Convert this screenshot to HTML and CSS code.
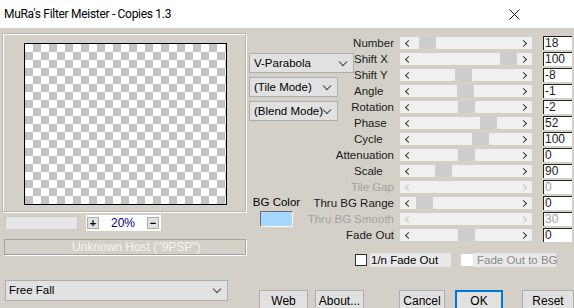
FILE: index.html
```html
<!DOCTYPE html>
<html lang="en">
<head>
    <meta charset="UTF-8">
    <title>MuRa's Filter Meister - Copies 1.3</title>
    <link rel="stylesheet" href="styles.css">
</head>
<body>
<div class="window">
    <div class="titlebar">
        <span class="title">MuRa's Filter Meister - Copies 1.3</span>
        <svg class="close" width="11" height="11" viewBox="0 0 11 11">
            <path d="M0.5 0.5 L10.5 10.5 M10.5 0.5 L0.5 10.5" stroke="#111" stroke-width="1" fill="none"/>
        </svg>
    </div>
    <div class="content">
        <div class="left">
            <div class="group">
                <div class="preview"></div>
            </div>
            <div class="zoomrow">
                <div class="progress"></div>
                <div class="zoombox">
                    <span class="zbtn">+</span>
                    <span class="zval">20%</span>
                    <span class="zbtn">&minus;</span>
                </div>
            </div>
            <div class="status">Unknown Host ("9PSP")</div>
            <div class="combo preset">Free Fall<span class="chev"></span></div>
        </div>
        <div class="right">
            <div class="upper">
                <div class="mid">
                    <div class="combo wide">V-Parabola<span class="chev"></span></div>
                    <div class="combo">(Tile Mode)<span class="chev"></span></div>
                    <div class="combo">(Blend Mode)<span class="chev"></span></div>
                    <div class="bgcolor">
                        <span>BG Color</span>
                        <div class="swatch"></div>
                    </div>
                </div>
                <div class="params">
                    <div class="row"><span class="lbl">Number</span><div class="track"><span class="al"></span><span class="thumb" style="margin-left:8px"></span><span class="ar"></span></div><span class="val">18</span></div>
                    <div class="row"><span class="lbl">Shift X</span><div class="track"><span class="al"></span><span class="thumb" style="margin-left:89px"></span><span class="ar"></span></div><span class="val">100</span></div>
                    <div class="row"><span class="lbl">Shift Y</span><div class="track"><span class="al"></span><span class="thumb" style="margin-left:44px"></span><span class="ar"></span></div><span class="val">-8</span></div>
                    <div class="row"><span class="lbl">Angle</span><div class="track"><span class="al"></span><span class="thumb" style="margin-left:46px"></span><span class="ar"></span></div><span class="val">-1</span></div>
                    <div class="row"><span class="lbl">Rotation</span><div class="track"><span class="al"></span><span class="thumb" style="margin-left:47px"></span><span class="ar"></span></div><span class="val">-2</span></div>
                    <div class="row"><span class="lbl">Phase</span><div class="track"><span class="al"></span><span class="thumb" style="margin-left:69px"></span><span class="ar"></span></div><span class="val">52</span></div>
                    <div class="row"><span class="lbl">Cycle</span><div class="track"><span class="al"></span><span class="thumb" style="margin-left:61px"></span><span class="ar"></span></div><span class="val">100</span></div>
                    <div class="row"><span class="lbl">Attenuation</span><div class="track"><span class="al"></span><span class="thumb" style="margin-left:47px"></span><span class="ar"></span></div><span class="val">0</span></div>
                    <div class="row"><span class="lbl">Scale</span><div class="track"><span class="al"></span><span class="thumb" style="margin-left:24px"></span><span class="ar"></span></div><span class="val">90</span></div>
                    <div class="row off"><span class="lbl">Tile Gap</span><div class="track"><span class="al"></span><span class="fill"></span><span class="ar"></span></div><span class="val">0</span></div>
                    <div class="row"><span class="lbl">Thru BG Range</span><div class="track"><span class="al"></span><span class="thumb" style="margin-left:5px"></span><span class="ar"></span></div><span class="val">0</span></div>
                    <div class="row off"><span class="lbl">Thru BG Smooth</span><div class="track"><span class="al"></span><span class="fill"></span><span class="ar"></span></div><span class="val">30</span></div>
                    <div class="row"><span class="lbl">Fade Out</span><div class="track"><span class="al"></span><span class="thumb" style="margin-left:47px"></span><span class="ar"></span></div><span class="val">0</span></div>
                    <div class="checks">
                        <label class="check"><span class="box"></span><span class="ctext">1/n Fade Out</span></label>
                        <label class="check off"><span class="box"></span><span class="ctext">Fade Out to BG</span></label>
                    </div>
                </div>
            </div>
            <div class="buttons">
                <span class="btn web">Web</span>
                <span class="btn about">About...</span>
                <span class="btn cancel">Cancel</span>
                <span class="btn ok">OK</span>
                <span class="btn reset">Reset</span>
            </div>
        </div>
    </div>
</div>
</body>
</html>
```

FILE: styles.css
```css
* {
    margin: 0;
    padding: 0;
    box-sizing: border-box;
}

body {
    background: #d4d0c8;
    font-family: "Liberation Sans", Arial, sans-serif;
    font-size: 11px;
    font-weight: 400;
    color: #000;
}

.window {
    width: 574px;
    height: 308px;
    overflow: hidden;
    display: flex;
    flex-direction: column;
}

.titlebar {
    flex-shrink: 0;
    height: 28px;
    background: #fff;
    display: flex;
    align-items: center;
    padding-left: 4px;
}

.title {
    font-family: Roboto, "Liberation Sans", sans-serif;
    font-size: 12px;
    letter-spacing: -0.3px;
    color: #000;
    flex: 1;
}

.close {
    margin-right: 54px;
}

.content {
    flex: 1;
    min-height: 0;
    display: flex;
    padding-top: 5px;
}

/* left side */
.left {
    width: 246px;
    margin-left: 2px;
    display: flex;
    flex-direction: column;
}

.group {
    flex-shrink: 0;
    height: 179px;
    border: 1px solid #bdb9b1;
    box-shadow: inset 1px 1px 0 #fff, 1px 1px 0 #fff;
    padding: 9px 0 0 21px;
}

.preview {
    width: 203px;
    height: 162px;
    border: 1px solid #000;
    background-color: #fff;
    background-image: repeating-conic-gradient(#c3c3c3 0 25%, #fff 0 50%);
    background-size: 16px 16px;
}

.zoomrow {
    display: flex;
    align-items: center;
    margin-top: 3px;
    height: 16px;
}

.progress {
    width: 73px;
    height: 14px;
    margin-left: 3px;
    background: #e6e6e6;
    border: 1px solid #c8c8c8;
}

.zoombox {
    margin-left: 8px;
    width: 75px;
    height: 16px;
    background: #fff;
    display: flex;
    align-items: center;
    padding: 0 2px 0 1px;
}

.zbtn {
    width: 12px;
    height: 12px;
    background: #e1e1e1;
    border: 1px solid #adadad;
    font-size: 11px;
    font-weight: bold;
    line-height: 10px;
    text-align: center;
}

.zval {
    flex: 1;
    text-align: center;
    color: #000080;
    font-size: 12px;
    line-height: 16px;
}

.status {
    margin-top: 8px;
    margin-left: 2px;
    height: 16px;
    border: 1px solid #a7a39b;
    box-shadow: 1px 1px 0 #fff;
    color: #f4f4f4;
    font-size: 12px;
    line-height: 14px;
    padding-left: 67px;
}

.combo {
    position: relative;
    flex-shrink: 0;
    width: 89px;
    height: 20px;
    background: #e1e1e1;
    border: 1px solid #adadad;
    font-size: 11.5px;
    line-height: 18px;
    padding-left: 4px;
    white-space: nowrap;
}

.combo.wide {
    width: 105px;
}

.chev {
    position: absolute;
    right: 7px;
    top: 5px;
    width: 6px;
    height: 6px;
    border-right: 1px solid #444;
    border-bottom: 1px solid #444;
    transform: rotate(45deg);
}

.preset {
    margin-top: 25px;
    margin-left: 3px;
    width: 223px;
    height: 21px;
    padding-left: 3px;
}

/* right side */
.right {
    flex: 1;
    display: flex;
    flex-direction: column;
}

.upper {
    display: flex;
    align-items: flex-start;
}

.mid {
    width: 108px;
    padding: 20px 0 0 3px;
    display: flex;
    flex-direction: column;
    gap: 4px;
}

.bgcolor {
    margin: 71px 0 0 7px;
    width: 41px;
    display: flex;
    flex-direction: column;
    align-items: center;
    font-size: 11.5px;
    white-space: nowrap;
}

.swatch {
    margin-top: 3px;
    width: 33px;
    height: 16px;
    background: #a6d7ff;
    border: 1px solid;
    border-color: #6d6d6d #fff #fff #6d6d6d;
}

.params {
    flex: 1;
    padding-top: 2px;
}

.row {
    display: flex;
    height: 16px;
    align-items: flex-start;
}

.lbl {
    width: 40px;
    flex-shrink: 0;
    direction: rtl;
    text-align: left;
    white-space: nowrap;
    font-size: 11.5px;
    line-height: 16px;
    color: #1a1a1a;
}

.track {
    margin: 2px 0 0 6px;
    width: 132px;
    height: 12px;
    background: #f0f0f0;
    display: flex;
    align-items: center;
}

.thumb {
    width: 17px;
    height: 12px;
    background: #cdcdcd;
}

.track .fill {
    flex: 1;
}

.al,
.ar {
    width: 5px;
    height: 5px;
    border-left: 1px solid #333;
    border-bottom: 1px solid #333;
}

.al {
    margin-left: 6px;
    transform: rotate(45deg);
}

.ar {
    margin-left: auto;
    margin-right: 6px;
    transform: rotate(-135deg);
}

.val {
    margin: 1px 0 0 11px;
    height: 14px;
    width: 29px;
    background: #fff;
    border-top: 1px solid #222;
    border-left: 1px solid #222;
    font-size: 12px;
    line-height: 13px;
    padding-left: 1px;
    color: #1a1a1a;
}

.off .lbl,
.off .val {
    color: #a0a0a0;
}

.off .al,
.off .ar {
    border-color: #c4c4c4;
}

.checks {
    display: flex;
    margin-top: 10px;
    margin-left: 1px;
    height: 14px;
}

.check {
    display: flex;
    align-items: center;
    font-size: 11.5px;
    white-space: nowrap;
}

.check .box {
    width: 12px;
    height: 12px;
    background: #fff;
    border: 1px solid #333;
}

.check .ctext {
    margin-left: 3px;
    background: #e9e9e9;
    height: 14px;
    line-height: 14px;
    padding: 0 3px 0 1px;
    width: 81px;
}

.check.off {
    margin-left: 10px;
}

.check.off .box {
    border: none;
}

.check.off .ctext {
    color: #8a8a8a;
    margin-left: 0;
    padding-left: 4px;
    width: 83px;
}

.buttons {
    display: flex;
    margin-top: 23px;
    margin-left: 13px;
}

.btn {
    flex-shrink: 0;
    height: 22px;
    background: #e1e1e1;
    border: 1px solid #adadad;
    font-size: 12px;
    text-align: center;
    line-height: 20px;
}

.web { width: 49px; }
.about { width: 49px; margin-left: 7px; }
.cancel { width: 46px; margin-left: 35px; }
.ok { width: 48px; margin-left: 10px; border: 2px solid #0078d7; line-height: 18px; }
.reset { width: 52px; margin-left: 19px; }
```
